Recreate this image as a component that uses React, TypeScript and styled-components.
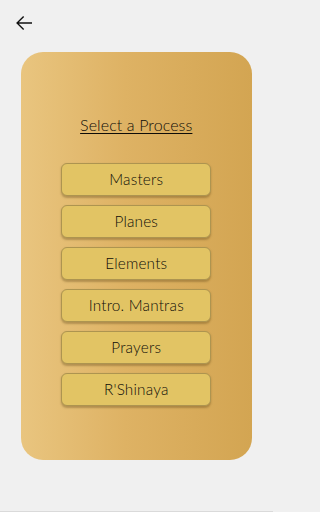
import React from "react";
import styled, { createGlobalStyle } from "styled-components";

const Global = createGlobalStyle`
  html, body { margin: 0; padding: 0; background: #f0f0f0; }
  body { font-family: Lato, "Open Sans", sans-serif; }
  * { box-sizing: border-box; }
`;

const Screen = styled.div`
  width: 273px;
  height: 512px;
  display: flex;
  flex-direction: column;
  border-bottom: 1px solid #dadada;
`;

const Header = styled.div`
  height: 52px;
  padding: 11px 0 0 12px;
  display: flex;
  align-items: flex-start;
`;

const BackButton = styled.button`
  width: 24px;
  height: 24px;
  padding: 0;
  border: none;
  background: transparent;
  display: flex;
  align-items: center;
  justify-content: center;
  cursor: pointer;
`;

const Card = styled.div`
  margin: 0 21px 0 20.5px;
  height: 408px;
  border-radius: 22px;
  background: linear-gradient(90deg, #e9c57f 0%, #deb264 45%, #d3a552 100%);
  display: flex;
  flex-direction: column;
  align-items: center;
  padding-top: 63px;
`;

const Title = styled.div`
  font-size: 16px;
  font-weight: 300;
  line-height: 19px;
  color: #0e0c08;
  text-decoration: underline;
  text-underline-offset: 2px;
  text-decoration-thickness: 1px;
  margin-bottom: 29px;
  letter-spacing: 0.1px;
`;

const List = styled.div`
  display: flex;
  flex-direction: column;
  gap: 9px;
`;

const ProcessButton = styled.button`
  width: 150px;
  height: 33px;
  border-radius: 6px;
  border: 1px solid #ad9450;
  background: #e2c464;
  box-shadow: 0 1.5px 2px rgba(90, 65, 20, 0.35);
  font-family: Lato, "Open Sans", sans-serif;
  font-size: 15.3px;
  font-weight: 300;
  color: #0e0c08;
  display: flex;
  align-items: center;
  justify-content: center;
  padding: 0 0 1px;
  letter-spacing: 0.2px;
  cursor: pointer;
`;

const items = ["Masters", "Planes", "Elements", "Intro. Mantras", "Prayers", "R'Shinaya"];

export default function App() {
  return (
    <>
      <Global />
      <Screen>
        <Header>
          <BackButton aria-label="Back">
            <svg width="24" height="24" viewBox="0 0 24 24">
              <path
                d="M20 11.3H6.8l5.35-5.35-1-1L4.1 12l7.05 7.05 1-1-5.35-5.35H20z"
                fill="#111"
              />
            </svg>
          </BackButton>
        </Header>
        <Card>
          <Title>Select a Process</Title>
          <List>
            {items.map((it) => (
              <ProcessButton key={it}>{it}</ProcessButton>
            ))}
          </List>
        </Card>
      </Screen>
    </>
  );
}
